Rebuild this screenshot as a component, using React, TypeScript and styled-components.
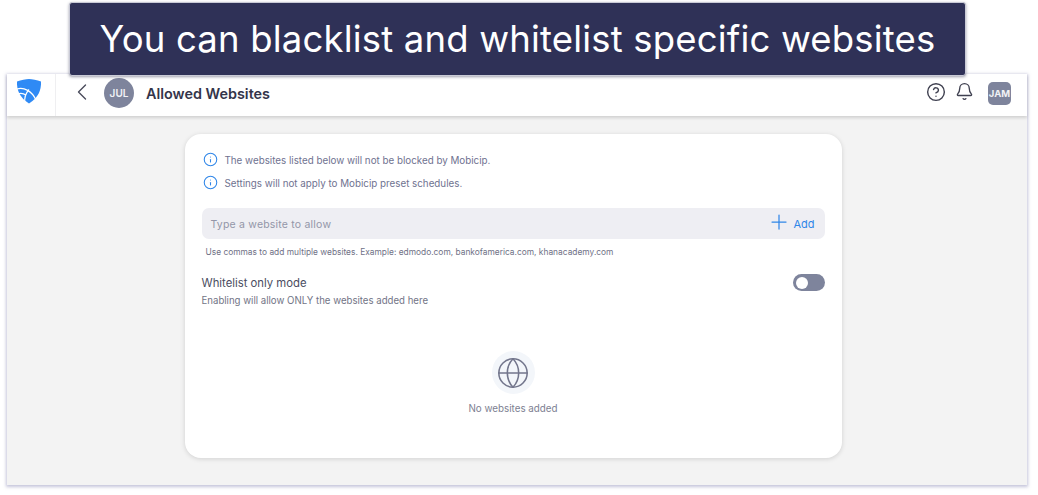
import React from 'react'
import styled, { createGlobalStyle } from 'styled-components'
import { ChevronLeft, CircleHelp, Bell, Info, Plus, Globe } from 'lucide-react'

const GlobalStyle = createGlobalStyle`
  html, body {
    margin: 0;
    padding: 0;
    background: #fff;
  }
  body {
    font-family: Inter, "Liberation Sans", sans-serif;
  }
`

const Page = styled.div`
  width: 1038px;
  height: 495px;
  overflow: hidden;
  display: flex;
  flex-direction: column;
  padding: 2px 0 0 7px;
  box-sizing: border-box;
`

const Banner = styled.div`
  position: relative;
  z-index: 2;
  width: 897px;
  height: 74px;
  margin: 0 0 -2px 62px;
  display: flex;
  align-items: center;
  justify-content: center;
  box-sizing: border-box;
  background: #2f3157;
  border-radius: 3px;
  border: 1px solid #c9cad6;
  box-shadow: 0 1px 3px rgba(40, 40, 70, 0.45);
  color: #fff;
  font-size: 36.5px;
  font-weight: 400;
  letter-spacing: 0.18px;
`

const Shot = styled.div`
  width: 1020px;
  height: 411px;
  display: flex;
  flex-direction: column;
  background: #f3f3f3;
  box-shadow: 0 1px 3px 1px rgba(150, 150, 190, 0.55);
`

const Header = styled.header`
  height: 42px;
  flex: none;
  display: flex;
  align-items: stretch;
  background: #fff;
  box-shadow: 0 2px 3px rgba(0, 0, 0, 0.14);
  z-index: 1;
`

const LogoCell = styled.div`
  width: 49px;
  flex: none;
  padding: 4px 0 0 9px;
  box-sizing: border-box;
  border-right: 1px solid #efeff1;
`

const BackButton = styled.div`
  margin: 4px 0 0 12px;
  width: 28px;
  color: #4a4c5c;
`

const JulAvatar = styled.div`
  width: 30px;
  height: 30px;
  margin: 4px 0 0 8px;
  border-radius: 50%;
  background: #7e849c;
  color: #f1f2f5;
  font-size: 10px;
  font-weight: 600;
  display: flex;
  align-items: center;
  justify-content: center;
`

const Title = styled.h1`
  margin: 0 0 0 12px;
  padding-top: 11px;
  font-size: 14.4px;
  line-height: 18px;
  font-weight: 600;
  color: #34354a;
`

const HeaderRight = styled.div`
  margin-left: auto;
  padding: 8px 16px 0 0;
  display: flex;
  align-items: flex-start;
  color: #3f4050;
`

const JamBadge = styled.div`
  width: 23px;
  height: 23px;
  margin: 0 0 0 14px;
  border-radius: 5px;
  background: #7e849c;
  color: #f1f2f5;
  font-size: 9.5px;
  font-weight: 700;
  display: flex;
  align-items: center;
  justify-content: center;
`

const BellWrap = styled.span`
  margin-left: 9px;
  height: 20px;
`

const Body = styled.main`
  flex: 1;
  display: flex;
  justify-content: center;
  align-items: flex-start;
  padding: 18px 8px 0 0;
`

const Card = styled.section`
  width: 657px;
  height: 324px;
  box-sizing: border-box;
  padding: 17px 17px 0;
  background: #fff;
  border-radius: 16px;
  box-shadow: 0 1px 5px rgba(0, 0, 0, 0.14);
  display: flex;
  flex-direction: column;
`

const Notice = styled.div`
  display: flex;
  align-items: center;
  gap: 7px;
  height: 16px;
  margin: 0 0 7px 1px;
  font-size: 9.8px;
  color: #6f7290;
  svg {
    color: #2f86e8;
    flex: none;
  }
`

const NoticeText = styled.span`
  padding-top: 2px;
`

const InputBar = styled.div`
  height: 31px;
  margin-top: 11px;
  padding: 0 10px 0 9px;
  border-radius: 7px;
  background: #eeeef3;
  display: flex;
  align-items: center;
  justify-content: space-between;
`

const Placeholder = styled.span`
  padding-top: 1px;
  font-size: 10.5px;
  letter-spacing: 0.2px;
  color: #9396a8;
`

const AddButton = styled.span`
  display: flex;
  align-items: center;
  gap: 2px;
  color: #2f86e8;
  font-size: 11px;
  font-weight: 400;
  svg {
    margin-top: -3px;
  }
`

const Hint = styled.p`
  margin: 7px 0 0 4px;
  font-size: 8.4px;
  line-height: 12px;
  color: #6f7186;
`

const ModeRow = styled.div`
  display: flex;
  justify-content: space-between;
  align-items: flex-start;
  margin-top: 16px;
`

const ModeTitle = styled.div`
  font-size: 11.3px;
  line-height: 18px;
  color: #4a4c60;
`

const ModeText = styled.div`
  margin-top: 2px;
  font-size: 9.65px;
  line-height: 14px;
  color: #727486;
`

const Toggle = styled.div`
  width: 32px;
  height: 17px;
  padding: 0 0 0 3px;
  box-sizing: border-box;
  border-radius: 9px;
  background: #7e849c;
  display: flex;
  align-items: center;
`

const Knob = styled.span`
  width: 12px;
  height: 12px;
  border-radius: 50%;
  background: #fff;
`

const Empty = styled.div`
  margin-top: 43px;
  display: flex;
  flex-direction: column;
  align-items: center;
`

const GlobeCircle = styled.div`
  width: 43px;
  height: 43px;
  border-radius: 50%;
  background: #f3f6fa;
  color: #73768c;
  display: flex;
  align-items: center;
  justify-content: center;
`

const EmptyText = styled.div`
  margin-top: 8px;
  font-size: 9.8px;
  line-height: 14px;
  color: #7d7f92;
`

const ShieldLogo = () => (
  <svg width="26" height="26" viewBox="0 0 26 26" aria-hidden="true">
    <path
      d="M13 1C16 1 21 2 25 3.500C25.500 12 22 20 13 25.500C4 20 .5 12 1 3.500C5 2 10 1 13 1Z"
      fill="#2f8af5"
    />
    <path
      d="M1 11C8 9 16 13 20 22M13 11.500C10 15 8 20 9 25M1.500 16C4 15 7 15 10 17"
      fill="none"
      stroke="#fff"
      strokeWidth="1.200"
    />
  </svg>
)

const notices = [
  'The websites listed below will not be blocked by Mobicip.',
  'Settings will not apply to Mobicip preset schedules.',
]

export default function App() {
  return (
    <Page>
      <GlobalStyle />
      <Banner>You can blacklist and whitelist specific websites</Banner>
      <Shot>
        <Header>
          <LogoCell>
            <ShieldLogo />
          </LogoCell>
          <BackButton>
            <ChevronLeft size={28} strokeWidth={1.2} />
          </BackButton>
          <JulAvatar>JUL</JulAvatar>
          <Title>Allowed Websites</Title>
          <HeaderRight>
            <CircleHelp size={20} strokeWidth={1.7} />
            <BellWrap>
              <Bell size={19} strokeWidth={1.7} />
            </BellWrap>
            <JamBadge>JAM</JamBadge>
          </HeaderRight>
        </Header>
        <Body>
          <Card>
            {notices.map((text) => (
              <Notice key={text}>
                <Info size={15} strokeWidth={1.7} />
                <NoticeText>{text}</NoticeText>
              </Notice>
            ))}
            <InputBar>
              <Placeholder>Type a website to allow</Placeholder>
              <AddButton>
                <Plus size={24} strokeWidth={1.25} />
                Add
              </AddButton>
            </InputBar>
            <Hint>Use commas to add multiple websites. Example: edmodo.com, bankofamerica.com, khanacademy.com</Hint>
            <ModeRow>
              <div>
                <ModeTitle>Whitelist only mode</ModeTitle>
                <ModeText>Enabling will allow ONLY the websites added here</ModeText>
              </div>
              <Toggle>
                <Knob />
              </Toggle>
            </ModeRow>
            <Empty>
              <GlobeCircle>
                <Globe size={34} strokeWidth={1.1} />
              </GlobeCircle>
              <EmptyText>No websites added</EmptyText>
            </Empty>
          </Card>
        </Body>
      </Shot>
    </Page>
  )
}
